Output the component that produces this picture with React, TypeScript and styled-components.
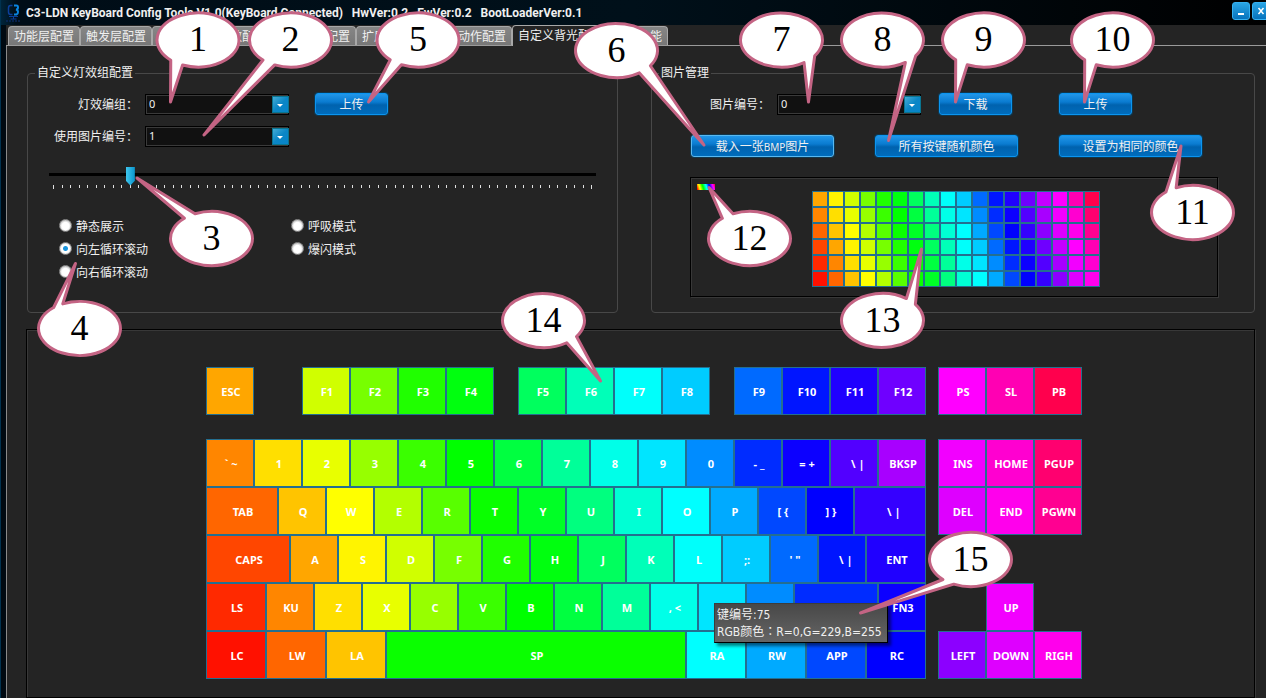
import React, { useState } from "react";
import styled, { createGlobalStyle } from "styled-components";

const GlobalStyle = createGlobalStyle`
  *, *::before, *::after { box-sizing: border-box; }
  body {
    margin: 0;
    background: #242424;
    color: #f0f0f0;
    font: 12px/16px "Noto Sans", "Noto Sans CJK SC", sans-serif;
    overflow: hidden;
  }
  button, select, input { font: inherit; color: inherit; margin: 0; }
`;

/* Rainbow running down each column and on into the next one. */
const SPECTRUM = [
  "#ff1100", "#ff2900", "#ff4600", "#ff6600", "#ff8600", "#ffa600",
  "#ffc400", "#ffdf00", "#fff400", "#ffff00", "#e8ff00", "#d0ff00",
  "#b3ff00", "#97ff00", "#77ff00", "#58ff00", "#3aff00", "#20ff00",
  "#0aff00", "#00ff00", "#00ff0f", "#00ff26", "#00ff40", "#00ff5e",
  "#00ff7f", "#00ff99", "#00ffb8", "#00ffd4", "#00ffe8", "#00fffb",
  "#00ffff", "#00e5ff", "#00ccff", "#00aaff", "#008cff", "#006aff",
  "#0048ff", "#002cff", "#0015ff", "#0000ff", "#0c00ff", "#2000ff",
  "#3500ff", "#5200ff", "#6f00ff", "#8c00ff", "#a800ff", "#c400ff",
  "#de00ff", "#f200ff", "#ff00ff", "#ff00ec", "#ff00d0", "#ff00b3",
  "#ff0091", "#ff006f", "#ff004d",
];
const ROWS = 6;
const COLS = 18;
const colorAt = (row: number, col: number) => SPECTRUM[col * 3 + (ROWS - 1 - row)];
const CELLS = Array.from({ length: ROWS * COLS }, (_, i) => ({
  row: Math.floor(i / COLS),
  col: i % COLS,
}));

/* ---------- window frame ---------- */

const Window = styled.div`
  position: relative;
  display: flex;
  flex-direction: column;
  min-height: 100vh;
  overflow: hidden;
  border-left: 1px solid #003250;
  background: #000a12;
`;

const TitleBar = styled.header`
  display: flex;
  align-items: center;
  gap: 4px;
  height: 25px;
  padding-left: 4px;
  overflow: hidden;
  background: linear-gradient(90deg, #00243a 0, #000d17 16px, #00101a 50%, #000 100%);
`;

const Title = styled.h1`
  flex: 1;
  margin: 0;
  font: 700 12px/24px Roboto, "Noto Sans", sans-serif;
  white-space: pre;
`;

const WindowButtons = styled.div`
  display: flex;
  gap: 2px;
  align-self: flex-start;
  margin: 2px -4px 0 0;
`;

const WindowButton = styled.button`
  display: grid;
  place-items: center;
  width: 18px;
  height: 18px;
  padding: 0;
  border: 1px solid #35b0f0;
  border-radius: 3px;
  background: linear-gradient(#2aa5e4, #0673bd);
`;

const Body = styled.main`
  flex: 1;
  margin-left: 5px;
  background: #242424;
`;

const Tabs = styled.nav`
  display: flex;
  align-items: flex-end;
  height: 21px;
  padding-left: 2px;
  border-bottom: 1px solid #9a9a9a;
`;

const Tab = styled.button<{ $active?: boolean }>`
  height: ${(p) => (p.$active ? 21 : 19)}px;
  margin-bottom: ${(p) => (p.$active ? -1 : 0)}px;
  padding: ${(p) => (p.$active ? "0 5px 1px" : "1px 5px 0")};
  border: 1px solid #a8a8a8;
  border-bottom: 0;
  border-radius: 4px 4px 0 0;
  background: ${(p) => (p.$active ? "#242424" : "linear-gradient(#868686, #777)")};
  line-height: 16px;
  white-space: nowrap;
`;

const Page = styled.div`
  border-left: 1px solid #8a8a8a;
  padding: 19px 11px 0 20px;
`;

const Groups = styled.div`
  display: grid;
  grid-template-columns: 591fr 604fr;
  gap: 33px;
`;

const Group = styled.fieldset`
  min-width: 0;
  margin: 0;
  padding: 12px 0 15px;
  border: 1px solid #484848;
  border-radius: 4px;
`;

const GroupTitle = styled.legend`
  margin-left: 7px;
  padding: 0 2px;
  line-height: 16px;
`;

/* ---------- form parts ---------- */

const Field = styled.div<{ $top?: number }>`
  display: flex;
  align-items: center;
  height: 22px;
  margin-top: ${(p) => p.$top ?? 0}px;
`;

const FieldLabel = styled.label<{ $width: number }>`
  width: ${(p) => p.$width}px;
  margin-right: 7px;
  padding-top: 2px;
  text-align: right;
  white-space: nowrap;
`;

const SelectBox = styled.div<{ $after?: number }>`
  position: relative;
  width: 144px;
  height: 21px;
  margin-right: ${(p) => p.$after ?? 0}px;
`;

const SelectInput = styled.select`
  display: block;
  width: 100%;
  height: 100%;
  padding: 0 20px 0 3px;
  appearance: none;
  border: 1px solid #000;
  box-shadow: inset 0 0 0 1px #3a3a3a;
  background: #111;
  font-size: 11px;
  line-height: 18px;
`;

const Arrow = styled.svg`
  position: absolute;
  top: 2px;
  right: 0;
  pointer-events: none;
`;

const PushButton = styled.button<{ $wide?: boolean; $focused?: boolean }>`
  width: ${(p) => (p.$wide ? 143 : 73)}px;
  height: 22px;
  padding: 2px 0 0;
  border: 1px solid ${(p) => (p.$focused ? "#58b8f0" : "#0a94f0")};
  border-radius: 3px;
  box-shadow: 0 0 0 1px #10364c;
  background: linear-gradient(#2196e8, #0a7bd0 40%, #0062ae 55%, #006cbc);
  line-height: 16px;
  white-space: nowrap;
`;

const SmallLatin = styled.span`
  font-size: 10px;
`;

const ButtonRow = styled.div`
  display: flex;
  gap: 41px;
  margin: 20px 0 0 39px;
`;

const Spread = styled.div`
  display: flex;
  gap: 47px;
`;

/* ---------- slider ---------- */

const SliderBox = styled.div`
  margin: 20px 21px 0;
`;

const Slider = styled.input`
  display: block;
  width: 100%;
  height: 18px;
  padding: 0;
  appearance: none;
  background: linear-gradient(#000, #000) 0 6px / 100% 3px no-repeat;
  &::-webkit-slider-thumb {
    appearance: none;
    width: 9px;
    height: 19px;
    border: 0;
    background: linear-gradient(90deg, #3ec6ee, #0a94cc);
    clip-path: polygon(0 0, 100% 0, 100% 75%, 50% 100%, 0 75%);
  }
`;

const Ticks = styled.div`
  display: flex;
  justify-content: space-between;
  height: 4px;
  padding: 0 3px 0 4px;
`;

const Tick = styled.span`
  width: 1px;
  height: 3px;
  background: #e0e0e0;
  &:first-child, &:last-child { height: 4px; }
`;

const Radios = styled.div`
  display: grid;
  grid-template-columns: 232px 232px;
  grid-auto-rows: 23px;
  margin: 25px 0 0 31px;
`;

const RadioLabel = styled.label<{ $column: number }>`
  grid-column: ${(p) => p.$column};
  display: flex;
  align-items: center;
  gap: 4px;
`;

const RadioText = styled.span`
  padding-top: 2px;
`;

const Radio = styled.input`
  width: 13px;
  height: 13px;
  appearance: none;
  border: 1px solid #8a8a8a;
  border-radius: 50%;
  background: radial-gradient(circle at 50% 55%, #fff 45%, #b8b8b8 75%);
  &:checked {
    background: radial-gradient(circle, #1a94dc 0 2px, #fff 3px 4px, #bbb 7px);
  }
`;

/* ---------- picture preview ---------- */

const Sunken = styled.div`
  border: 1px solid #000;
  box-shadow: inset 1px 1px #383838, 1px 1px #383838;
`;

const Preview = styled(Sunken)`
  display: flex;
  align-items: flex-start;
  gap: 97px;
  height: 120px;
  margin: 20px 36px 0 38px;
  padding: 6px;
`;

const PixelGrid = styled.div`
  display: grid;
  grid-template-columns: repeat(18, 16px);
  grid-auto-rows: 16px;
  margin-top: 7px;
`;

const Pixel = styled.span<{ $color: string }>`
  border: 1px solid #246f90;
  background: ${(p) => p.$color};
`;

/* ---------- keyboard ---------- */

const BoardFrame = styled(Sunken)`
  margin: 16px 0 0 -1px;
  padding: 37px 0 18px 179px;
`;

const Board = styled.div`
  position: relative;
  display: flex;
  gap: 12px;
`;

const Cluster = styled.div`
  display: flex;
  flex-direction: column;
`;

const KeyRow = styled.div`
  display: flex;
  height: 48px;
  &:first-child { margin-bottom: 24px; }
`;

const Space = styled.span<{ $width: number }>`
  flex: none;
  width: ${(p) => p.$width}px;
`;

const Key = styled.button<{ $width: number; $color: string }>`
  flex: none;
  width: ${(p) => p.$width}px;
  padding: 2px 0 0 2px;
  border: 1px solid #246f90;
  background: ${(p) => p.$color};
  color: #fff;
  font: 700 11px/16px "Noto Sans", sans-serif;
  white-space: pre;
`;

const Tooltip = styled.div`
  position: absolute;
  top: 236px;
  left: 508px;
  padding: 3px 5px 1px 2px;
  border: 1px solid #3c3c3c;
  border-right-color: #000;
  border-bottom-color: #000;
  box-shadow: 3px 3px 3px rgba(0, 0, 0, 0.5);
  background: linear-gradient(#484848, #656565);
  font-family: "DejaVu Sans Condensed", "Noto Sans CJK TC", sans-serif;
  line-height: 17px;
  white-space: nowrap;
`;

const Callouts = styled.svg`
  position: absolute;
  top: 0;
  left: -1px;
  pointer-events: none;
`;

const CalloutNumber = styled.text`
  fill: #000;
  font: 36px "Liberation Serif", serif;
  text-anchor: middle;
`;

/* A key is [label, spectrum index, width]; a bare number is empty space. */
type Cell = [string, number, number?] | number;

const run = (labels: string[], start: number): Cell[] =>
  labels.map((label, i) => [label, start + i * 3]);

const MAIN_KEYS: Cell[][] = [
  [["ESC", 5], 48, ...run(["F1", "F2", "F3", "F4"], 11), 24,
    ...run(["F5", "F6", "F7", "F8"], 23), 24, ...run(["F9", "F10", "F11", "F12"], 35)],
  run(["` ~", "1", "2", "3", "4", "5", "6", "7", "8", "9", "0", "- _", "= +", "  \\ |", "BKSP"], 4),
  [["TAB", 3, 72], ...run(["Q", "W", "E", "R", "T", "Y", "U", "I", "O", "P", "[ {", "] }"], 6), ["  \\ |", 42, 72]],
  [["CAPS", 2, 84], ...run(["A", "S", "D", "F", "G", "H", "J", "K", "L", ";:", "' \"", "  \\ |"], 5), ["ENT", 41, 60]],
  [["LS", 1, 60], ...run(["KU", "Z", "X", "C", "V", "B", "N", "M", ", <", ". >", "/ ?"], 4), ["RS", 37, 84], ["FN3", 40]],
  [["LC", 0, 60], ["LW", 3, 60], ["LA", 6, 60], ["SP", 18, 300], ["RA", 30, 60], ["RW", 33, 60], ["APP", 36, 60], ["RC", 39, 60]],
];

const SIDE_KEYS: Cell[][] = [
  run(["PS", "SL", "PB"], 50),
  run(["INS", "HOME", "PGUP"], 49),
  run(["DEL", "END", "PGWN"], 48),
  [],
  [48, ["UP", 49]],
  run(["LEFT", "DOWN", "RIGH"], 45),
];

const TABS = [
  "功能层配置", "触发层配置", "按键触发灯光效配置", "宏定义键配置",
  "扩展层配置", "组合动作配置", "自定义背光配置", "其他功能",
];

const MODES: [string, number][] = [
  ["静态展示", 1], ["呼吸模式", 2], ["向左循环滚动", 1], ["爆闪模式", 2], ["向右循环滚动", 1],
];

type Point = [number, number];

/* number, centre, first and second base point, tip */
const CALLOUTS: [number, Point, Point, Point, Point][] = [
  [1, [198, 40], [171, 60], [182, 66], [170.5, 102]],
  [2, [290.5, 40], [263, 60], [274, 66], [204, 135]],
  [5, [418, 40], [390, 60], [400.5, 66], [368.5, 102]],
  [6, [616.5, 50.5], [651, 66], [639.5, 73], [704, 145]],
  [7, [781.5, 40], [815, 56], [804.5, 63], [808.5, 102]],
  [8, [882.5, 40], [916, 56], [906, 63], [888.5, 140.5]],
  [9, [983.5, 40], [955.5, 60], [966.5, 66], [955.5, 102]],
  [10, [1112.5, 40], [1084.5, 60], [1095.5, 66], [1084.5, 102]],
  [3, [211.5, 238.5], [194.5, 213], [184, 218], [137, 178]],
  [4, [79.5, 328.5], [62.5, 303.5], [53, 307], [75.5, 263.5]],
  [11, [1192.5, 212.5], [1176, 187.5], [1166, 192], [1181, 146]],
  [12, [749.5, 238.5], [732.5, 213], [722, 218], [709, 187.5]],
  [13, [882.5, 320.5], [915, 304.5], [907, 298], [921.5, 249]],
  [14, [543.5, 320.5], [576.5, 336.5], [567, 343], [600.5, 381]],
  [15, [970.5, 559.5], [943, 579.5], [953.5, 584.5], [860.5, 613]],
];

const RX = 41;
const RY = 27;

/* Moves a point along its ray from the centre onto the balloon's outline. */
function ontoBalloon([cx, cy]: Point, [x, y]: Point): Point {
  const angle = Math.atan2((y - cy) / RY, (x - cx) / RX);
  return [cx + RX * Math.cos(angle), cy + RY * Math.sin(angle)];
}

function calloutPath(center: Point, a: Point, b: Point, tip: Point) {
  const from = ontoBalloon(center, a);
  const to = ontoBalloon(center, b);
  const cross =
    (from[0] - center[0]) * (to[1] - center[1]) - (from[1] - center[1]) * (to[0] - center[0]);
  return `M${from} L${tip} L${to} A${RX} ${RY} 0 1 ${cross > 0 ? 1 : 0} ${from} Z`;
}

function Logo() {
  return (
    <svg width="17" height="20" viewBox="0 0 17 20" fill="none" aria-hidden="true">
      <path d="M7.500 2.500H5.500Q3.500 2.500 3.500 5V9Q3.500 11.500 5.500 11.500H7.500" stroke="#0b3f9a" strokeWidth="1.500" />
      <path d="M9 2.500H11.500Q13 2.500 13 4.500T11 6.500Q13 7 13 9T11.500 11.500H9" stroke="#0a86e0" strokeWidth="2" />
      <path d="M4 13.500H13M8.500 13.500V16M5.500 16H11.500" stroke="#0b3f9a" />
      <path d="M1 18H16" stroke="#08275c" strokeWidth="1.500" strokeDasharray="2 1" />
    </svg>
  );
}

function Combo({ id, value, after }: { id: string; value: number; after?: number }) {
  return (
    <SelectBox $after={after}>
      <SelectInput id={id} defaultValue={value}>
        {[0, 1, 2, 3].map((n) => <option key={n}>{n}</option>)}
      </SelectInput>
      <Arrow width="17" height="18" viewBox="0 0 17 18" aria-hidden="true">
        <defs>
          <linearGradient id={`${id}-fill`} x1="0" y1="0" x2="1" y2="1">
            <stop offset="0" stopColor="#48aed6" />
            <stop offset="0.500" stopColor="#0a86c6" />
            <stop offset="1" stopColor="#0784ca" />
          </linearGradient>
        </defs>
        <rect x="0.500" y="0.500" width="16" height="16" fill={`url(#${id}-fill)`} stroke="#0a7590" />
        <path d="M5 8h6L8 11z" fill="#fff" />
      </Arrow>
    </SelectBox>
  );
}

function KeyCluster({ rows }: { rows: Cell[][] }) {
  return (
    <Cluster>
      {rows.map((row, r) => (
        <KeyRow key={r}>
          {row.map((cell, i) =>
            typeof cell === "number" ? (
              <Space key={i} $width={cell} />
            ) : (
              <Key key={i} type="button" $color={SPECTRUM[cell[1]]} $width={cell[2] ?? 48}>
                {cell[0]}
              </Key>
            )
          )}
        </KeyRow>
      ))}
    </Cluster>
  );
}

export default function App() {
  const [mode, setMode] = useState("向左循环滚动");
  const [speed, setSpeed] = useState(9);

  return (
    <Window>
      <GlobalStyle />
      <TitleBar>
        <Logo />
        <Title>{"C3-LDN KeyBoard Config Tools V1.0(KeyBoard Connected)   HwVer:0.2   FwVer:0.2   BootLoaderVer:0.1"}</Title>
        <WindowButtons>
          <WindowButton type="button" aria-label="最小化">
            <svg width="10" height="10" aria-hidden="true"><path d="M2 8h6" stroke="#fff" strokeWidth="2" /></svg>
          </WindowButton>
          <WindowButton type="button" aria-label="关闭">
            <svg width="10" height="10" aria-hidden="true"><path d="M2.500 2l5 6M7.500 2l-5 6" stroke="#fff" strokeWidth="1.500" /></svg>
          </WindowButton>
        </WindowButtons>
      </TitleBar>

      <Body>
        <Tabs>
          {TABS.map((name) => (
            <Tab key={name} type="button" $active={name === "自定义背光配置"}>{name}</Tab>
          ))}
        </Tabs>

        <Page>
          <Groups>
            <Group>
              <GroupTitle>自定义灯效组配置</GroupTitle>
              <Field>
                <FieldLabel htmlFor="effect" $width={110}>灯效编组：</FieldLabel>
                <Combo id="effect" value={0} after={26} />
                <PushButton type="button">上传</PushButton>
              </Field>
              <Field $top={10}>
                <FieldLabel htmlFor="picture" $width={110}>使用图片编号：</FieldLabel>
                <Combo id="picture" value={1} />
              </Field>
              <SliderBox>
                <Slider
                  type="range"
                  aria-label="速度"
                  min={0}
                  max={63}
                  value={speed}
                  onChange={(e) => setSpeed(Number(e.target.value))}
                />
                <Ticks>{Array.from({ length: 64 }, (_, i) => <Tick key={i} />)}</Ticks>
              </SliderBox>
              <Radios>
                {MODES.map(([name, column]) => (
                  <RadioLabel key={name} $column={column}>
                    <Radio type="radio" name="mode" checked={mode === name} onChange={() => setMode(name)} />
                    <RadioText>{name}</RadioText>
                  </RadioLabel>
                ))}
              </Radios>
            </Group>

            <Group>
              <GroupTitle>图片管理</GroupTitle>
              <Field>
                <FieldLabel htmlFor="image" $width={118}>图片编号：</FieldLabel>
                <Combo id="image" value={0} after={18} />
                <Spread>
                  <PushButton type="button">下载</PushButton>
                  <PushButton type="button">上传</PushButton>
                </Spread>
              </Field>
              <ButtonRow>
                <PushButton type="button" $wide $focused>
                  载入一张<SmallLatin>BMP</SmallLatin>图片
                </PushButton>
                <PushButton type="button" $wide>所有按键随机颜色</PushButton>
                <PushButton type="button" $wide>设置为相同的颜色</PushButton>
              </ButtonRow>
              <Preview>
                <svg width="18" height="6" shapeRendering="crispEdges" aria-hidden="true">
                  {CELLS.map(({ row, col }) => (
                    <rect key={`${row}-${col}`} x={col} y={row} width="1" height="1" fill={colorAt(row, col)} />
                  ))}
                </svg>
                <PixelGrid>
                  {CELLS.map(({ row, col }) => <Pixel key={`${row}-${col}`} $color={colorAt(row, col)} />)}
                </PixelGrid>
              </Preview>
            </Group>
          </Groups>

          <BoardFrame>
            <Board>
              <KeyCluster rows={MAIN_KEYS} />
              <KeyCluster rows={SIDE_KEYS} />
              <Tooltip role="tooltip">
                键编号:75
                <br />
                RGB颜色：R=0,G=229,B=255
              </Tooltip>
            </Board>
          </BoardFrame>
        </Page>
      </Body>

      <Callouts width="1266" height="698" viewBox="0 0 1266 698">
        {CALLOUTS.map(([n, center, a, b, tip]) => (
          <g key={n}>
            <path
              d={calloutPath(center, a, b, tip)}
              fill="#fff"
              stroke="#c46484"
              strokeWidth="3"
              strokeLinejoin="round"
            />
            <CalloutNumber x={center[0]} y={center[1] + 11}>{n}</CalloutNumber>
          </g>
        ))}
      </Callouts>
    </Window>
  );
}
